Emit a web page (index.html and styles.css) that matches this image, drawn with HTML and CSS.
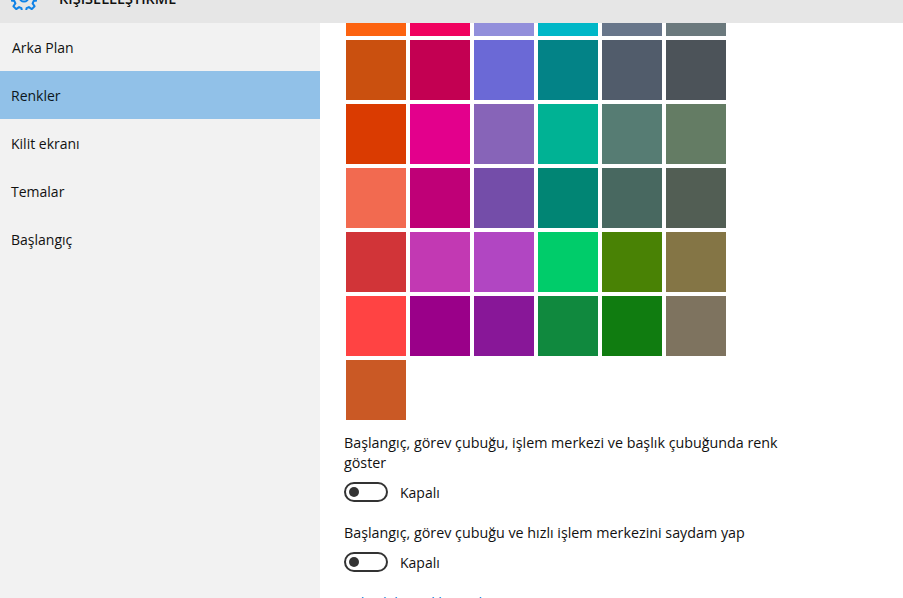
FILE: index.html
```html
<!DOCTYPE html>
<html lang="tr">
<head>
<meta charset="utf-8">
<title>Kişiselleştirme</title>
<link rel="stylesheet" href="styles.css">
</head>
<body>
<div class="window">
  <header class="titlebar">
    <svg class="gear" width="26" height="26" viewBox="0 0 26 26" aria-hidden="true">
      <path d="M11 1.5h4l.6 3.4 2.3 1 2.9-2 2.8 2.8-2 2.9 1 2.3 3.4.6v4l-3.4.6-1 2.3 2 2.9-2.8 2.8-2.9-2-2.3 1-.6 3.4h-4l-.6-3.4-2.3-1-2.9 2-2.8-2.8 2-2.9-1-2.3-3.4-.6v-4l3.4-.6 1-2.3-2-2.9 2.8-2.8 2.9 2 2.3-1z" />
      <circle cx="13" cy="13" r="4.5" />
    </svg>
    <h1 class="title">KİŞİSELLEŞTİRME</h1>
  </header>
  <div class="body">
    <nav class="sidebar">
      <a class="nav-item nav-first">Arka Plan</a>
      <a class="nav-item nav-active">Renkler</a>
      <a class="nav-item">Kilit ekranı</a>
      <a class="nav-item">Temalar</a>
      <a class="nav-item">Başlangıç</a>
    </nav>
    <main class="content">
      <div class="swatches">
        <span class="sw a1"></span><span class="sw a2"></span><span class="sw a3"></span><span class="sw a4"></span><span class="sw a5"></span><span class="sw a6"></span>
        <span class="sw b1"></span><span class="sw b2"></span><span class="sw b3"></span><span class="sw b4"></span><span class="sw b5"></span><span class="sw b6"></span>
        <span class="sw c1"></span><span class="sw c2"></span><span class="sw c3"></span><span class="sw c4"></span><span class="sw c5"></span><span class="sw c6"></span>
        <span class="sw d1"></span><span class="sw d2"></span><span class="sw d3"></span><span class="sw d4"></span><span class="sw d5"></span><span class="sw d6"></span>
        <span class="sw e1"></span><span class="sw e2"></span><span class="sw e3"></span><span class="sw e4"></span><span class="sw e5"></span><span class="sw e6"></span>
        <span class="sw f1"></span><span class="sw f2"></span><span class="sw f3"></span><span class="sw f4"></span><span class="sw f5"></span><span class="sw f6"></span>
        <span class="sw g1"></span>
      </div>
      <section class="setting">
        <p class="label">Başlangıç, görev çubuğu, işlem merkezi ve başlık çubuğunda renk göster</p>
        <div class="toggle-row"><span class="toggle"><span class="knob"></span></span><span class="state">Kapalı</span></div>
      </section>
      <section class="setting setting-second">
        <p class="label">Başlangıç, görev çubuğu ve hızlı işlem merkezini saydam yap</p>
        <div class="toggle-row"><span class="toggle"><span class="knob"></span></span><span class="state">Kapalı</span></div>
      </section>
      <a class="link">Yüksek karşıtlık ayarları</a>
    </main>
  </div>
</div>
</body>
</html>
```
FILE: styles.css
```css
* { box-sizing: border-box; }
html, body { margin: 0; height: 598px; overflow: hidden; background: #fff; }
body { font-family: "Open Sans", "Noto Sans", sans-serif; font-size: 14px; color: #111; }
.window { display: flex; flex-direction: column; height: 598px; width: 903px; overflow: hidden; }

.titlebar { flex: 0 0 23px; height: 23px; background: #e6e6e6; display: flex; overflow: hidden; padding-left: 11px; }
.gear { flex: none; margin-top: -16px; fill: none; stroke: #0f82e6; stroke-width: 2; stroke-linejoin: round; }
.title { margin: -11px 0 0 22px; font-size: 14.5px; line-height: 20px; font-weight: 600; color: #111; white-space: nowrap; }

.body { flex: 1; display: flex; min-height: 0; }
.sidebar { flex: 0 0 320px; background: #f2f2f2; display: flex; flex-direction: column; }
.nav-item { height: 48px; display: flex; align-items: center; padding-left: 11px; font-size: 14px; color: #111; }
.nav-first { padding-left: 12px; }
.nav-active { background: #91c1e8; color: #0c1620; }

.content { flex: 1; min-width: 0; overflow: hidden; padding-left: 24px; background: #fff; }
.swatches { display: grid; grid-template-columns: repeat(6, 60px); grid-auto-rows: 60px; gap: 4px; margin: -47px 0 0 2px; }
.sw { display: block; }
.a1 { background: #fc6310; } .a2 { background: #f0025f; } .a3 { background: #928fdb; } .a4 { background: #00b7c7; } .a5 { background: #68768a; } .a6 { background: #6b797d; }
.b1 { background: #ca500f; } .b2 { background: #c30052; } .b3 { background: #6b69d6; } .b4 { background: #038387; } .b5 { background: #515c6b; } .b6 { background: #4c5359; }
.c1 { background: #da3b01; } .c2 { background: #e3008c; } .c3 { background: #8764b8; } .c4 { background: #00b294; } .c5 { background: #567c73; } .c6 { background: #647c64; }
.d1 { background: #f26a50; } .d2 { background: #bf0077; } .d3 { background: #744da9; } .d4 { background: #018574; } .d5 { background: #486860; } .d6 { background: #525e54; }
.e1 { background: #d13438; } .e2 { background: #c239b3; } .e3 { background: #b146c2; } .e4 { background: #00cc6a; } .e5 { background: #498205; } .e6 { background: #847545; }
.f1 { background: #ff4343; } .f2 { background: #9a0089; } .f3 { background: #881798; } .f4 { background: #10893e; } .f5 { background: #107c10; } .f6 { background: #7e735f; }
.g1 { background: #ca5925; }

.setting { margin-top: 13px; width: 450px; }
.setting-second { margin-top: 21px; }
.label { margin: 0; font-size: 14.3px; line-height: 20px; color: #111; }
.toggle-row { display: flex; align-items: center; margin-top: 9px; height: 20px; }
.toggle { width: 44px; height: 20px; border: 2px solid #333; border-radius: 10px; display: flex; align-items: center; padding-left: 3px; }
.knob { width: 10px; height: 10px; border-radius: 50%; background: #333; }
.state { margin-left: 12px; font-size: 14px; }
.link { display: block; margin-top: 21px; font-size: 14.3px; line-height: 20px; color: #0078d7; }
```
